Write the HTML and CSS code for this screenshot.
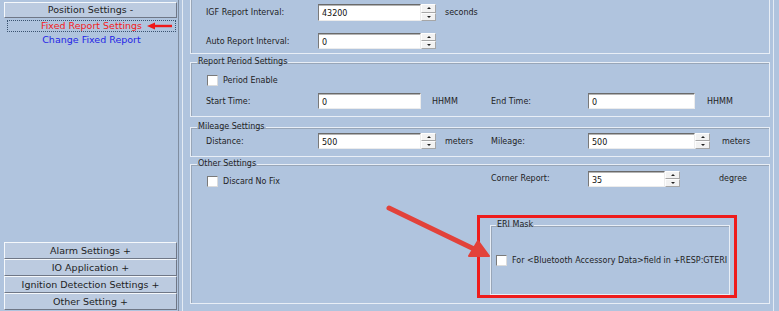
FILE: index.html
```html
<!DOCTYPE html>
<html lang="en">

<head>
    <meta charset="UTF-8">
    <title>Fixed Report Settings</title>
    <link rel="stylesheet" href="styles.css">
</head>

<body>
    <div class="app">
        <!-- Navigation -->
        <aside class="sidebar">
            <div class="nav-top">
                <div class="nav-btn">Position Settings -</div>
                <div class="nav-link current">
                    Fixed Report Settings
                    <svg class="mini-arrow" width="26" height="8" viewBox="0 0 26 8">
                        <path d="M7 4 H25" stroke="#f01818" stroke-width="2.4" />
                        <path d="M0 4 L8 0.5 L8 7.5 Z" fill="#f01818" />
                    </svg>
                </div>
                <div class="nav-link">Change Fixed Report</div>
            </div>
            <div class="nav-bottom">
                <div class="nav-btn">Alarm Settings +</div>
                <div class="nav-btn">IO Application +</div>
                <div class="nav-btn">Ignition Detection Settings +</div>
                <div class="nav-btn">Other Setting +</div>
            </div>
        </aside>
        <div class="splitter"></div>

        <!-- Settings -->
        <main class="content">
            <div class="group group-first">
                <div class="row row-igf">
                    <div class="half">
                        <span class="lbl">IGF Report Interval:</span>
                        <span class="field w103">43200</span><span class="spin"><i class="up"></i><i class="down"></i></span>
                        <span class="unit">seconds</span>
                    </div>
                </div>
                <div class="row row-auto">
                    <div class="half">
                        <span class="lbl">Auto Report Interval:</span>
                        <span class="field w103">0</span><span class="spin"><i class="up"></i><i class="down"></i></span>
                    </div>
                </div>
            </div>

            <fieldset class="group group-period">
                <legend>Report Period Settings</legend>
                <label class="check"><span class="box"></span>Period Enable</label>
                <div class="row row-time">
                    <div class="half">
                        <span class="lbl">Start Time:</span>
                        <span class="field w103">0</span>
                        <span class="unit unit-hhmm">HHMM</span>
                    </div>
                    <div class="half">
                        <span class="lbl lbl2">End Time:</span>
                        <span class="field w107">0</span>
                        <span class="unit unit-wide">HHMM</span>
                    </div>
                </div>
            </fieldset>

            <fieldset class="group group-mileage">
                <legend>Mileage Settings</legend>
                <div class="row">
                    <div class="half">
                        <span class="lbl">Distance:</span>
                        <span class="field w103">500</span><span class="spin"><i class="up"></i><i class="down"></i></span>
                        <span class="unit">meters</span>
                    </div>
                    <div class="half">
                        <span class="lbl lbl2">Mileage:</span>
                        <span class="field w107">500</span><span class="spin"><i class="up"></i><i class="down"></i></span>
                        <span class="unit unit-wide">meters</span>
                    </div>
                </div>
            </fieldset>

            <fieldset class="group group-other">
                <legend>Other Settings</legend>
                <div class="other-grid">
                    <label class="check check-fix"><span class="box"></span>Discard No Fix</label>
                    <div class="corner">
                        <span class="lbl lbl2">Corner Report:</span>
                        <span class="field w77">35</span><span class="spin"><i class="up"></i><i class="down"></i></span>
                        <span class="unit unit-degree">degree</span>
                    </div>
                    <div></div>
                    <div class="highlight">
                        <fieldset class="group group-eri">
                            <legend>ERI Mask</legend>
                            <label class="check"><span class="box"></span>For &lt;Bluetooth Accessory Data&gt;field in +RESP:GTERI</label>
                        </fieldset>
                    </div>
                </div>
            </fieldset>
        </main>
    </div>

    <!-- annotation arrow -->
    <svg class="callout" width="779" height="311" viewBox="0 0 779 311">
        <path d="M389 208 L474 249" stroke="#e2423a" stroke-width="5" stroke-linecap="round" />
        <path d="M489 256 L469 256 L478 241 Z" fill="#e2423a" stroke="#e2423a" stroke-width="2" stroke-linejoin="round" />
    </svg>
</body>

</html>
```

FILE: styles.css
```css
body {
    margin: 0;
    font-family: "DejaVu Sans", Verdana, sans-serif;
    background: #b0c4de;
    color: #1e1e1e;
    overflow: hidden;
}

.app {
    display: flex;
    height: 311px;
}

/* Navigation */
.sidebar {
    width: 179px;
    box-sizing: border-box;
    border-right: 1px solid #7f8da0;
    padding: 2px 1px 1px 4px;
    display: flex;
    flex-direction: column;
    justify-content: space-between;
    font-size: 9.5px;
}

.nav-btn {
    height: 17px;
    box-sizing: border-box;
    background: #bccbe0;
    border: 1px solid #6f7786;
    border-top-color: #f5f8fb;
    border-left-color: #f5f8fb;
    text-align: center;
    line-height: 15px;
}

.nav-top .nav-btn {
    height: 16px;
    line-height: 14px;
}

.nav-link {
    position: relative;
    text-align: center;
    height: 12px;
    line-height: 11px;
    margin: 2px 1px 0 3px;
    color: #2424e6;
}

.nav-link.current {
    color: #f42020;
    border: 1px dotted #3a5370;
    box-sizing: border-box;
    line-height: 10px;
}

.mini-arrow {
    position: absolute;
    right: 2px;
    top: 1px;
}

.splitter {
    width: 3px;
}

/* Settings */
.content {
    width: 592px;
    box-sizing: border-box;
    border-left: 1px solid #e4ebf4;
    border-right: 1px solid #e4ebf4;
    padding: 0 3px 0 7px;
    font-size: 8px;
}

.group {
    margin: 0;
    border: 1px solid #e8eef6;
    box-shadow: inset 1px 1px 0 #98a6b8;
    padding: 0 0 0 15px;
    min-width: 0;
}

.group legend {
    margin-left: -9px;
    padding: 0 1px;
    line-height: 10px;
    height: 10px;
}

.group-first {
    border-top: none;
    box-shadow: inset 1px 0 0 #98a6b8;
    padding-top: 4px;
    padding-bottom: 4px;
}

.group-period {
    margin-top: 3px;
    padding-top: 7px;
    padding-bottom: 7px;
}

.group-mileage {
    margin-top: 5px;
    padding-top: 1px;
    padding-bottom: 7px;
}

.group-other {
    margin-top: 2px;
    padding-top: 0;
    padding-bottom: 5px;
}

.row {
    display: flex;
    align-items: center;
}

.row-auto {
    margin-top: 12px;
}

.row-time {
    margin-top: 6px;
}

.half {
    width: 285px;
    flex-shrink: 0;
    display: flex;
    align-items: center;
}

.lbl {
    width: 112px;
    flex-shrink: 0;
}

.lbl2 {
    width: 97px;
}

.field {
    height: 16px;
    flex-shrink: 0;
    box-sizing: border-box;
    background: #fff;
    border: 1px solid #ececec;
    border-top-color: #6a6a6a;
    border-left-color: #7a7a7a;
    box-shadow: inset 0 1px 0 #b4b4b4;
    padding: 3px 0 0 3px;
    line-height: 11px;
    color: #111;
}

.row-igf .field,
.row-igf .spin {
    height: 17px;
}

.w103 {
    width: 103px;
}

.w107 {
    width: 107px;
}

.w77 {
    width: 77px;
}

.spin {
    width: 15px;
    height: 16px;
    flex-shrink: 0;
    display: flex;
    flex-direction: column;
}

.spin i {
    flex: 1;
    position: relative;
    background: #f2f2f2;
    border: 1px solid #a6a6a6;
    border-top-color: #fdfdfd;
    border-left-color: #fdfdfd;
}

.spin i::after {
    content: "";
    position: absolute;
    left: 5px;
    top: 2px;
    border-left: 2px solid transparent;
    border-right: 2px solid transparent;
}

.spin .up::after {
    border-bottom: 2px solid #222;
}

.spin .down::after {
    border-top: 2px solid #222;
}

.unit {
    margin-left: 9px;
}

.unit-hhmm {
    margin-left: 11px;
}

.unit-wide {
    margin-left: 12px;
}

.unit-degree {
    margin-left: 39px;
}

.check {
    display: flex;
    align-items: center;
    height: 13px;
}

.box {
    width: 11px;
    height: 11px;
    box-sizing: border-box;
    background: #fff;
    border: 1px solid #dcdcdc;
    border-top-color: #7a7a7a;
    border-left-color: #7a7a7a;
    margin: 0 5px 0 1px;
}

.other-grid {
    display: grid;
    grid-template-columns: 271px 1fr;
}

.check-fix {
    margin-top: 6px;
}

.corner {
    display: flex;
    align-items: center;
    padding-left: 14px;
}

.highlight {
    margin-top: 27px;
    width: 260px;
    box-sizing: border-box;
    border: 3px solid #ee1c1c;
    padding: 2px 4px 0 10px;
}

.group-eri {
    padding: 24px 0 27px 4px;
}

.group-eri legend {
    margin-left: 1px;
}

.callout {
    position: absolute;
    left: 0;
    top: 0;
    pointer-events: none;
}
```
